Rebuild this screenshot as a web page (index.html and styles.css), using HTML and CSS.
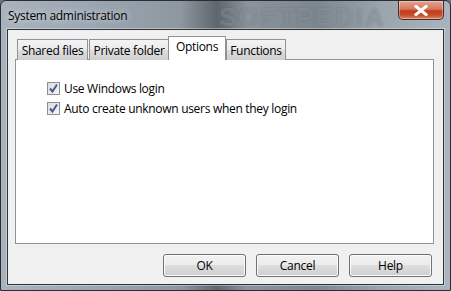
FILE: index.html
```html
<!DOCTYPE html>
<html>
<head>
<meta charset="utf-8">
<link rel="stylesheet" href="styles.css">
</head>
<body>
<div class="window">
  <div class="titlebar">
    <div class="title">System administration</div>
    <div class="watermark">SOFTPEDIA</div>
    <div class="close">
      <svg width="14" height="11" viewBox="0 0 14 11"><path d="M2 1.5 L12 9.5 M12 1.5 L2 9.5" stroke="#fff" stroke-width="3" stroke-linecap="square"/></svg>
    </div>
  </div>
  <div class="client">
    <div class="tabs">
      <div class="tab t1">Shared files</div>
      <div class="tab t2">Private folder</div>
      <div class="tab active">Options</div>
      <div class="tab t4">Functions</div>
    </div>
    <div class="panel">
      <label class="check"><span class="box"><svg width="11" height="11" viewBox="0 0 11 11"><path d="M2 5.5 L4.5 8.5 L9 1.5" fill="none" stroke="#4a5b94" stroke-width="2"/></svg></span>Use Windows login</label>
      <label class="check"><span class="box"><svg width="11" height="11" viewBox="0 0 11 11"><path d="M2 5.5 L4.5 8.5 L9 1.5" fill="none" stroke="#4a5b94" stroke-width="2"/></svg></span>Auto create unknown users when they login</label>
    </div>
    <div class="buttons">
      <button class="btn">OK</button>
      <button class="btn">Cancel</button>
      <button class="btn">Help</button>
    </div>
  </div>
</div>
</body>
</html>
```
FILE: styles.css
```css
html, body {
  margin: 0;
  padding: 0;
  width: 451px;
  height: 291px;
  overflow: hidden;
  background: #6a7480;
  font-family: "Open Sans", "Noto Sans", "DejaVu Sans", sans-serif;
  letter-spacing: -0.3px;
}
.window {
  width: 451px;
  height: 291px;
  box-sizing: border-box;
  border: 1px solid #2a2d31;
  border-radius: 6px 6px 2px 2px;
  background: linear-gradient(90deg, #a9b3bd 0%, #9aa6b2 20%, #8e979f 40%, #5e666e 48%, #8b949c 55%, #7c868f 70%, #9ba5ae 85%, #aab4be 100%);
  display: flex;
  flex-direction: column;
  position: relative;
}
.titlebar {
  height: 28px;
  display: flex;
  align-items: flex-start;
  position: relative;
}
.title {
  font-size: 12px;
  color: #000;
  padding: 6px 0 0 7px;
  text-shadow: 0 0 6px rgba(255,255,255,0.8);
  flex: 1;
  white-space: nowrap;
}
.watermark {
  position: absolute;
  left: 218px;
  top: 1px;
  font-family: "Liberation Sans", sans-serif;
  font-weight: bold;
  font-size: 26px;
  letter-spacing: 2px;
  color: rgba(200,206,212,0.22);
  text-shadow: 0 0 2px rgba(60,66,72,0.3);
}
.close {
  width: 46px;
  height: 19px;
  margin-right: 6px;
  box-sizing: border-box;
  border: 1px solid #4b2a26;
  border-top: none;
  border-radius: 0 0 5px 5px;
  background: linear-gradient(180deg, #e4a38f 0%, #d6785f 45%, #c2391b 55%, #c8502e 80%, #dd8a63 100%);
  display: flex;
  align-items: center;
  justify-content: center;
  box-shadow: inset 0 0 0 1px rgba(255,255,255,0.35);
  position: relative;
  z-index: 1;
}
.client {
  margin: 0 6px 5px 6px;
  flex: 1;
  border: 1px solid #2f3337;
  box-shadow: 0 0 0 1px rgba(255,255,255,0.35);
  background: #f0f0f0;
  display: flex;
  flex-direction: column;
  padding: 6px 9px 0 7px;
}
.tabs {
  display: flex;
  align-items: flex-end;
  height: 24px;
  padding-left: 2px;
  position: relative;
  z-index: 1;
  margin-bottom: -1px;
}
.tab {
  box-sizing: border-box;
  height: 21px;
  border: 1px solid #8e9298;
  border-bottom: none;
  background: linear-gradient(180deg, #f3f3f3 0%, #ebebeb 50%, #dddddd 51%, #cfcfcf 100%);
  font-size: 12px;
  color: #000;
  padding: 2px 0 0 0;
  text-align: center;
  margin-right: 1px;
  line-height: 17px;
}
.t1 { width: 71px; }
.t2 { width: 80px; margin-right: -1px; }
.t4 { width: 60px; margin-left: -1px; }
.tab.active {
  width: 58px;
  height: 24px;
  background: #fff;
  padding-top: 1px;
  position: relative;
  z-index: 2;
}
.panel {
  height: 185px;
  box-sizing: border-box;
  width: 419px;
  border: 1px solid #8e9298;
  background: #fff;
  padding: 22px 0 0 31px;
  display: flex;
  flex-direction: column;
  gap: 7px;
}
.check {
  display: flex;
  align-items: center;
  gap: 4px;
  font-size: 12px;
  height: 13px;
  color: #000;
  white-space: nowrap;
}
.box {
  width: 13px;
  height: 13px;
  box-sizing: border-box;
  border: 1px solid #8f8f8f;
  background: linear-gradient(135deg, #dcdcdc 0%, #f6f6f6 100%);
  display: flex;
  align-items: center;
  justify-content: center;
  flex: none;
}
.buttons {
  display: flex;
  justify-content: flex-end;
  gap: 10px;
  padding: 10px 2px 0 0;
}
.btn {
  width: 83px;
  height: 23px;
  box-sizing: border-box;
  border: 1px solid #707070;
  border-radius: 3px;
  background: linear-gradient(180deg, #f2f2f2 0%, #ebebeb 49%, #dddddd 50%, #cfcfcf 100%);
  box-shadow: inset 0 0 0 1px #fcfcfc;
  font-family: "Open Sans", "Noto Sans", sans-serif;
  font-size: 12px;
  letter-spacing: -0.3px;
  color: #000;
  padding: 0;
}
```
